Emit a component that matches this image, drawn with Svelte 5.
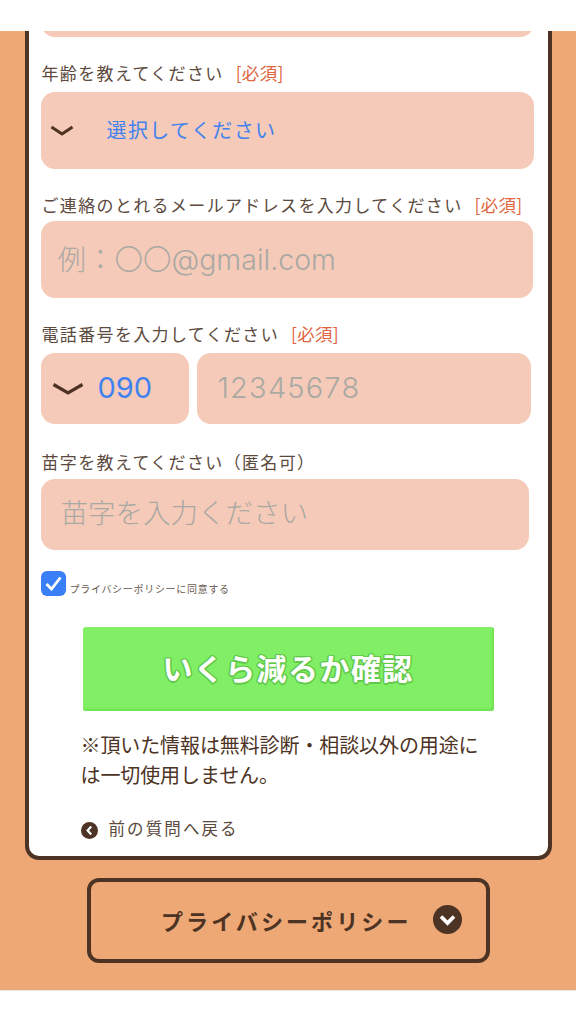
<script>
	const ages = ['選択してください', '20代', '30代', '40代', '50代', '60代以上'];
	const prefixes = ['090', '080', '070'];
	let age = $state(ages[0]);
	let prefix = $state(prefixes[0]);
	let agreed = $state(true);
</script>

<div class="topbar"></div>

<section class="page">
	<form class="card">
		<input class="box first" type="text" aria-label="前の項目" />

		<div class="field">
			<label class="label" for="age">年齢を教えてください<span class="req">[必須]</span></label>
			<div class="box select-age">
				<svg class="chev" width="24" height="12" viewBox="0 0 24 12">
					<path d="M1.5 2 L12 9 L22.5 2" fill="none" stroke="#4d3324" stroke-width="3" />
				</svg>
				<select id="age" bind:value={age}>
					{#each ages as a}
						<option>{a}</option>
					{/each}
				</select>
			</div>
		</div>

		<div class="field tight">
			<label class="label" for="mail">ご連絡のとれるメールアドレスを入力してください<span class="req">[必須]</span></label>
			<input id="mail" class="box mail" type="email" placeholder="例：〇〇@gmail.com" />
		</div>

		<div class="field">
			<label class="label" for="tel">電話番号を入力してください<span class="req">[必須]</span></label>
			<div class="tel-row">
				<div class="box select-tel">
					<svg class="chev" width="32" height="14" viewBox="0 0 32 14">
						<path d="M1.5 2.5 L16 11 L30.5 2.5" fill="none" stroke="#4d3324" stroke-width="3.2" />
					</svg>
					<select bind:value={prefix} aria-label="市外局番">
						{#each prefixes as p}
							<option>{p}</option>
						{/each}
					</select>
				</div>
				<input id="tel" class="box tel" type="tel" placeholder="12345678" />
			</div>
		</div>

		<div class="field name-field">
			<label class="label" for="name">苗字を教えてください（匿名可）</label>
			<input id="name" class="box name" type="text" placeholder="苗字を入力ください" />
		</div>

		<label class="agree">
			<input type="checkbox" bind:checked={agreed} />
			<span class="tick">
				<svg width="17" height="15" viewBox="0 0 17 15">
					<path d="M1.5 8 L6.5 13 L15.5 1.5" fill="none" stroke="#fff" stroke-width="2.8" />
				</svg>
			</span>
			<span class="agree-text">プライバシーポリシーに同意する</span>
		</label>

		<button class="submit" type="button">いくら減るか確認</button>

		<p class="note">※頂いた情報は無料診断・相談以外の用途には一切使用しません。</p>

		<a class="back" href="#top">
			<svg width="17" height="17" viewBox="0 0 17 17">
				<circle cx="8.5" cy="8.5" r="8.5" fill="#4d3324" />
				<path d="M10.2 4.6 L6.6 8.5 L10.2 12.4" fill="none" stroke="#fff" stroke-width="2.2" />
			</svg>
			<span>前の質問へ戻る</span>
		</a>
	</form>

	<button class="policy" type="button">
		<span>プライバシーポリシー</span>
		<svg width="29" height="29" viewBox="0 0 29 29">
			<circle cx="14.5" cy="14.5" r="14.5" fill="#4d3324" />
			<path d="M8 11.5 L14.5 18 L21 11.5" fill="none" stroke="#fff" stroke-width="3.8" />
		</svg>
	</button>
</section>

<div class="bottom"></div>

<style>
	:global(body) {
		background: #fff;
		font-family: 'Noto Sans CJK JP', 'Noto Sans', sans-serif;
	}

	.topbar {
		height: 31px;
	}

	.page {
		background: #eda875;
		height: 959px;
		overflow: hidden;
		display: flex;
		flex-direction: column;
		align-items: center;
	}

	.card {
		box-sizing: border-box;
		width: 527px;
		margin-top: -75px;
		padding: 0 12px;
		background: #fff;
		border: 4px solid #4d3324;
		border-radius: 14px;
		height: 904px;
		flex-shrink: 0;
	}

	.box {
		box-sizing: border-box;
		display: flex;
		align-items: center;
		background: #f6cab8;
		border: 0;
		border-radius: 14px;
		font-family: Inter, 'Noto Sans CJK JP', sans-serif;
		font-weight: 300;
		outline: none;
	}

	.box::placeholder {
		color: #a9a9a3;
		opacity: 1;
	}

	.first {
		width: 493px;
		height: 77px;
	}

	.field {
		margin-top: 24px;
	}

	.label {
		display: block;
		height: 24px;
		line-height: 24px;
		margin-bottom: 7px;
		font-size: 17px;
		letter-spacing: 1.35px;
		color: #5c4a3e;
		white-space: nowrap;
		padding-left: 1px;
	}

	.tight .label {
		margin-bottom: 4px;
	}

	.req {
		margin-left: 12px;
		font-size: 17.5px;
		color: #e0653f;
		letter-spacing: 0.3px;
	}

	.select-age {
		width: 493px;
		height: 77px;
		padding-left: 9px;
	}

	select {
		appearance: none;
		border: 0;
		background: transparent;
		color: #3f82f0;
		font-family: inherit;
		outline: none;
	}

	.select-age select {
		margin-left: 33px;
		flex: 1;
		font-size: 20px;
		letter-spacing: 1.4px;
	}

	.mail {
		width: 492px;
		height: 77px;
		padding: 0 0 1px 17px;
		font-size: 28.5px;
		color: #5c4a3e;
	}

	.tel-row {
		display: flex;
		gap: 8px;
	}

	.select-tel {
		width: 148px;
		height: 71px;
		padding-left: 11px;
	}

	.select-tel select {
		margin-left: 14px;
		margin-bottom: 2px;
		width: 70px;
		font-size: 29px;
	}

	.tel {
		width: 334px;
		height: 71px;
		padding: 0 0 2px 21px;
		font-size: 29px;
		letter-spacing: 1.2px;
	}

	.name-field {
		margin-top: 26px;
	}

	.name-field .label {
		margin-bottom: 5px;
	}

	.name {
		width: 488px;
		height: 71px;
		padding: 0 0 3px 20px;
		font-size: 27.5px;
	}

	.agree {
		display: flex;
		align-items: flex-end;
		margin-top: 21px;
		height: 25px;
	}

	.agree input {
		position: absolute;
		opacity: 0;
		width: 0;
		height: 0;
	}

	.tick {
		display: flex;
		align-items: center;
		justify-content: center;
		width: 25px;
		height: 25px;
		border-radius: 6px;
		background: #3a7ff6;
	}

	.agree-text {
		margin-left: 4px;
		font-size: 10px;
		letter-spacing: 0.7px;
		line-height: 14px;
		color: #6a5a50;
	}

	.submit {
		display: block;
		width: 411px;
		height: 84px;
		margin: 31px 0 0 42px;
		padding: 0 0 5px;
		border: 0;
		border-radius: 3px;
		background: #80ef65;
		box-shadow: inset -2px -2px 2px #70e352;
		color: #fff;
		font-family: inherit;
		font-size: 30px;
		font-weight: 700;
		letter-spacing: 1.4px;
		text-shadow:
			1.5px 0 0 #62c94c,
			-1.5px 0 0 #62c94c,
			0 1.5px 0 #62c94c,
			0 -1.5px 0 #62c94c,
			1px 1px 0 #62c94c,
			-1px -1px 0 #62c94c,
			1px -1px 0 #62c94c,
			-1px 1px 0 #62c94c;
	}

	.note {
		margin: 19px 0 0 40px;
		width: 405px;
		font-size: 20px;
		letter-spacing: -0.1px;
		line-height: 30px;
		color: #4d3324;
	}

	.back {
		display: flex;
		align-items: center;
		gap: 11px;
		margin: 26px 0 0 40px;
		height: 24px;
		font-size: 16.5px;
		letter-spacing: 2.1px;
		color: #5c4a3e;
		text-decoration: none;
	}

	.back svg {
		margin-top: 4px;
	}

	.policy {
		box-sizing: border-box;
		display: flex;
		align-items: center;
		justify-content: flex-end;
		gap: 21px;
		width: 403px;
		height: 85px;
		margin-top: 18px;
		flex-shrink: 0;
		padding: 0 24px 2px 0;
		background: transparent;
		border: 4px solid #4d3324;
		border-radius: 12px;
		color: #4d3324;
		font-family: inherit;
		font-size: 22px;
		font-weight: 700;
		letter-spacing: 3.1px;
	}

	.bottom {
		height: 34px;
		border-top: 1px solid #e6e6e6;
		box-sizing: border-box;
	}
</style>
